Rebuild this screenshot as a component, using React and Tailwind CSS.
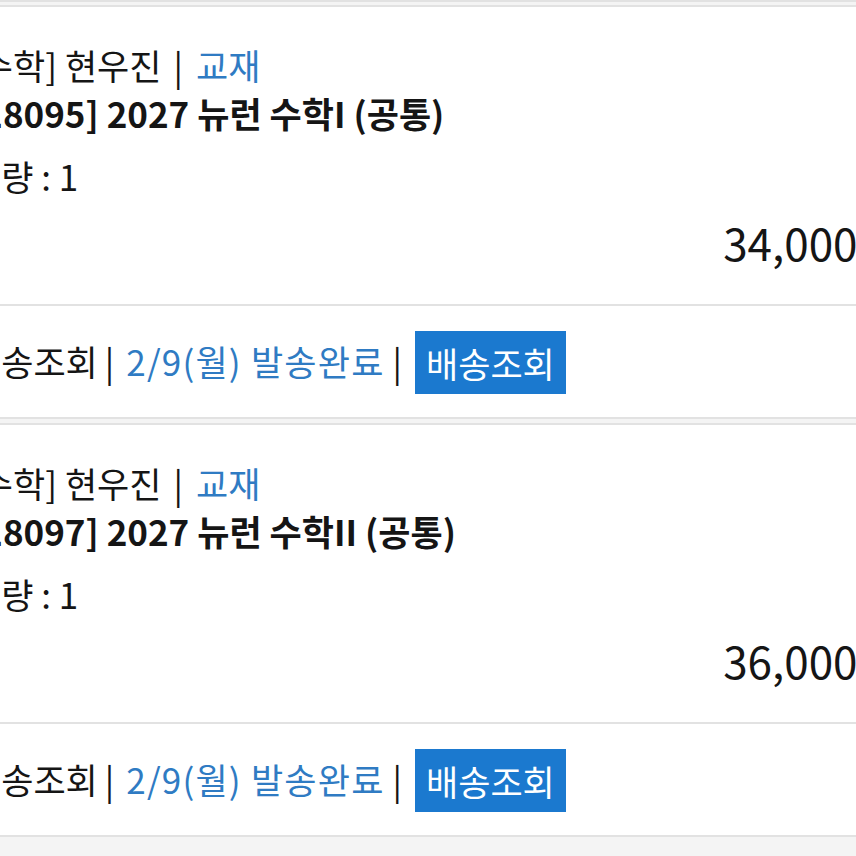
import React from "react";

const items = [
  { code: "[18095]", title: "2027 뉴런 수학I (공통)", qty: 1, price: "34,000" },
  { code: "[18097]", title: "2027 뉴런 수학II (공통)", qty: 1, price: "36,000" },
];

const OrderCard = ({ item }) => (
  <div className="bg-white border-y-2 border-[#e2e2e2]">
    {/* item info */}
    <div className="pt-[34px] pb-[34px] text-[35px] text-[#151515]">
      <p className="leading-[48px] whitespace-nowrap">
        [수학] 현우진
        <span className="ml-[12px] mr-[13px]">|</span>
        <span className="text-[#2f7bc3]">교재</span>
      </p>
      <p className="leading-[48px] font-bold whitespace-nowrap">
        {item.code} {item.title}
      </p>
      <p className="mt-[15px] leading-[48px]">수량 : {item.qty}</p>
      <div className="mt-[14px] flex justify-end">
        <span className="text-[44px] leading-[56px]">{item.price}원</span>
      </div>
    </div>

    {/* delivery */}
    <div className="h-[113px] border-t-2 border-[#e2e2e2] flex items-center text-[35px] whitespace-nowrap">
      <span className="text-[#151515]">배송조회</span>
      <span className="ml-[7px] mr-[12px] text-[#151515]">|</span>
      <span className="text-[#2f7bc3] tracking-[1.2px]">2/9(월) 발송완료</span>
      <span className="ml-[8px] mr-[13px] text-[#151515]">|</span>
      <span className="bg-[#1b79cf] text-white h-[63px] px-[11px] leading-[63px] mt-[2px]">배송조회</span>
    </div>
  </div>
);

export default function App() {
  return (
    <div
      className="w-[856px] h-[856px] overflow-hidden bg-[#f4f4f4]"
      style={{ fontFamily: "'Noto Sans CJK KR', 'Noto Sans', sans-serif" }}
    >
      <div className="h-[2px] bg-[#e2e2e2]" />
      <div className="-ml-[31px] w-[929px] mt-[3px] flex flex-col gap-[4px]">
        {items.map((item) => (
          <OrderCard key={item.code} item={item} />
        ))}
      </div>
    </div>
  );
}
